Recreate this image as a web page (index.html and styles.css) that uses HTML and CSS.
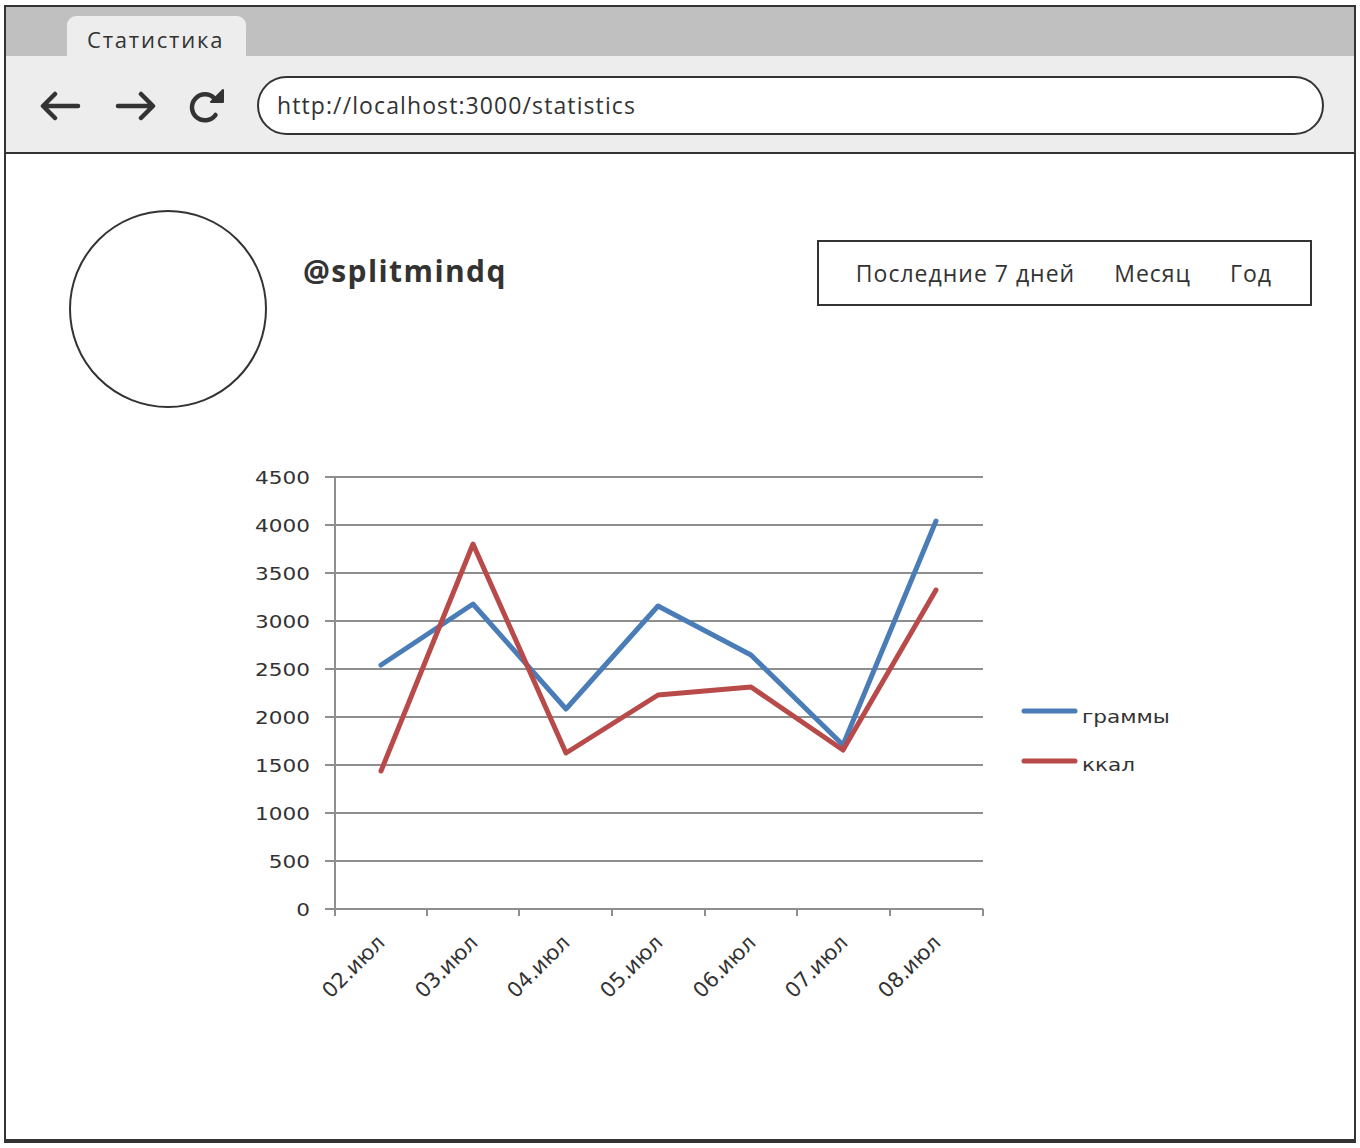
FILE: index.html
```html
<!DOCTYPE html>
<html lang="ru">
<head>
<meta charset="utf-8">
<title>Статистика</title>
<link rel="stylesheet" href="styles.css">
</head>
<body>
<div class="browser">
  <div class="tabbar">
    <div class="tab">Статистика</div>
  </div>
  <div class="toolbar">
    <svg class="icon icon-back" width="42" height="30" viewBox="0 0 42 30">
      <path d="M39 15 H5 M16 3 L4 15 L16 27" fill="none" stroke="#333" stroke-width="4.5" stroke-linecap="round" stroke-linejoin="round"/>
    </svg>
    <svg class="icon icon-fwd" width="42" height="30" viewBox="0 0 42 30">
      <path d="M3 15 H37 M26 3 L38 15 L26 27" fill="none" stroke="#333" stroke-width="4.5" stroke-linecap="round" stroke-linejoin="round"/>
    </svg>
    <svg class="icon icon-reload" width="40" height="36" viewBox="0 0 40 36">
      <path d="M27.5 10.5 A13 13 0 1 0 28.5 27" fill="none" stroke="#333" stroke-width="4.5" stroke-linecap="round"/>
      <polygon points="36,2 36,14 24,14" fill="#333" stroke="#333" stroke-width="2" stroke-linejoin="round"/>
    </svg>
    <div class="address">http://localhost:3000/statistics</div>
  </div>
  <div class="page">
    <div class="header">
      <div class="avatar"></div>
      <div class="username">@splitmindq</div>
      <div class="spacer"></div>
      <div class="periods">
        <span class="period">Последние 7 дней</span>
        <span class="period">Месяц</span>
        <span class="period">Год</span>
      </div>
    </div>
    <svg class="chart" width="960" height="580" viewBox="0 0 960 580">
      <g transform="translate(-240,-450)">
        <g class="grid" stroke="#8e8e8e" stroke-width="2">
          <line x1="325" y1="477" x2="983" y2="477"/>
          <line x1="325" y1="525" x2="983" y2="525"/>
          <line x1="325" y1="573" x2="983" y2="573"/>
          <line x1="325" y1="621" x2="983" y2="621"/>
          <line x1="325" y1="669" x2="983" y2="669"/>
          <line x1="325" y1="717" x2="983" y2="717"/>
          <line x1="325" y1="765" x2="983" y2="765"/>
          <line x1="325" y1="813" x2="983" y2="813"/>
          <line x1="325" y1="861" x2="983" y2="861"/>
          <line x1="325" y1="909" x2="983" y2="909"/>
          <line x1="335" y1="477" x2="335" y2="916"/>
          <line x1="427" y1="909" x2="427" y2="916"/>
          <line x1="519" y1="909" x2="519" y2="916"/>
          <line x1="612" y1="909" x2="612" y2="916"/>
          <line x1="705" y1="909" x2="705" y2="916"/>
          <line x1="797" y1="909" x2="797" y2="916"/>
          <line x1="890" y1="909" x2="890" y2="916"/>
          <line x1="983" y1="909" x2="983" y2="916"/>
        </g>
        <g class="ylabels">
          <text transform="translate(310,484) scale(1.2,1)">4500</text>
          <text transform="translate(310,532) scale(1.2,1)">4000</text>
          <text transform="translate(310,580) scale(1.2,1)">3500</text>
          <text transform="translate(310,628) scale(1.2,1)">3000</text>
          <text transform="translate(310,676) scale(1.2,1)">2500</text>
          <text transform="translate(310,724) scale(1.2,1)">2000</text>
          <text transform="translate(310,772) scale(1.2,1)">1500</text>
          <text transform="translate(310,820) scale(1.2,1)">1000</text>
          <text transform="translate(310,868) scale(1.2,1)">500</text>
          <text transform="translate(310,916) scale(1.2,1)">0</text>
        </g>
        <g class="xlabels">
          <text transform="translate(386,944) rotate(-45)">02.июл</text>
          <text transform="translate(479,944) rotate(-45)">03.июл</text>
          <text transform="translate(571,944) rotate(-45)">04.июл</text>
          <text transform="translate(664,944) rotate(-45)">05.июл</text>
          <text transform="translate(757,944) rotate(-45)">06.июл</text>
          <text transform="translate(849,944) rotate(-45)">07.июл</text>
          <text transform="translate(942,944) rotate(-45)">08.июл</text>
        </g>
        <polyline class="series series-grams" points="381,665 473,604 566,709 658,606 751,655 843,745 936,521"/>
        <polyline class="series series-kcal" points="381,771 473,544 566,753 658,695 751,687 843,750 936,590"/>
        <g class="legend">
          <line class="legend-line series-grams" x1="1024" y1="711" x2="1075" y2="711"/>
          <text transform="translate(1082,723) scale(1.2,1)">граммы</text>
          <line class="legend-line series-kcal" x1="1024" y1="761" x2="1075" y2="761"/>
          <text transform="translate(1082,771) scale(1.2,1)">ккал</text>
        </g>
      </g>
    </svg>
  </div>
</div>
</body>
</html>
```

FILE: styles.css
```css
body {
  margin: 0;
  background: #fff;
  color: #333;
  font-family: "Open Sans", "Noto Sans", sans-serif;
}

.browser {
  margin: 5px 0 0 4px;
  width: 1352px;
  height: 1138px;
  box-sizing: border-box;
  border: 2px solid #333;
  border-bottom: 4px solid #333;
  display: flex;
  flex-direction: column;
  overflow: hidden;
}

.tabbar {
  height: 49px;
  flex: none;
  background: #c0c0c0;
  display: flex;
  align-items: flex-end;
  padding-left: 61px;
}

.tab {
  width: 179px;
  height: 40px;
  box-sizing: border-box;
  background: #ededed;
  border-radius: 9px 9px 0 0;
  padding: 7px 0 0 20px;
  font-size: 22px;
  line-height: 32px;
  letter-spacing: 1.8px;
  white-space: nowrap;
  color: #333;
}

.toolbar {
  height: 98px;
  flex: none;
  background: #ededed;
  border-bottom: 2px solid #333;
  display: flex;
  align-items: center;
  padding: 3px 0 0 33px;
  box-sizing: border-box;
}

.icon {
  display: block;
  flex: none;
}

.icon-fwd {
  margin-left: 34px;
}

.icon-reload {
  margin-left: 30px;
}

.address {
  margin-left: 30px;
  width: 1067px;
  height: 59px;
  box-sizing: border-box;
  border: 2px solid #333;
  border-radius: 30px;
  background: #fff;
  padding-left: 18px;
  font-size: 23px;
  line-height: 55px;
  letter-spacing: 1.1px;
  color: #333;
}

.page {
  flex: 1;
  padding: 56px 42px 0 63px;
}

.header {
  display: flex;
  align-items: flex-start;
}

.avatar {
  width: 198px;
  height: 198px;
  box-sizing: border-box;
  border: 2px solid #333;
  border-radius: 50%;
  flex: none;
}

.username {
  margin: 46px 0 0 36px;
  font-size: 30px;
  line-height: 30px;
  font-weight: 700;
  letter-spacing: 1.4px;
  color: #333;
}

.spacer {
  flex: 1;
}

.periods {
  margin-top: 30px;
  height: 66px;
  box-sizing: border-box;
  border: 2px solid #333;
  padding: 0 38px 0 37px;
  display: flex;
  align-items: center;
  gap: 39px;
  font-size: 23px;
  letter-spacing: 1px;
  color: #333;
}

.chart {
  display: block;
  margin: 42px 0 0 171px;
}

.ylabels text {
  font-family: "DejaVu Sans", sans-serif;
  font-size: 18px;
  fill: #333;
  text-anchor: end;
}

.xlabels text {
  font-family: "DejaVu Sans", sans-serif;
  font-size: 21px;
  fill: #333;
  text-anchor: end;
}

.legend text {
  font-family: "DejaVu Sans", sans-serif;
  font-size: 18px;
  fill: #333;
}

.series {
  fill: none;
  stroke-width: 5;
  stroke-linejoin: round;
  stroke-linecap: round;
}

.series-grams {
  stroke: #4a7db7;
}

.series-kcal {
  stroke: #b94a4a;
}

.legend-line {
  stroke-width: 5;
  stroke-linecap: round;
}
```
